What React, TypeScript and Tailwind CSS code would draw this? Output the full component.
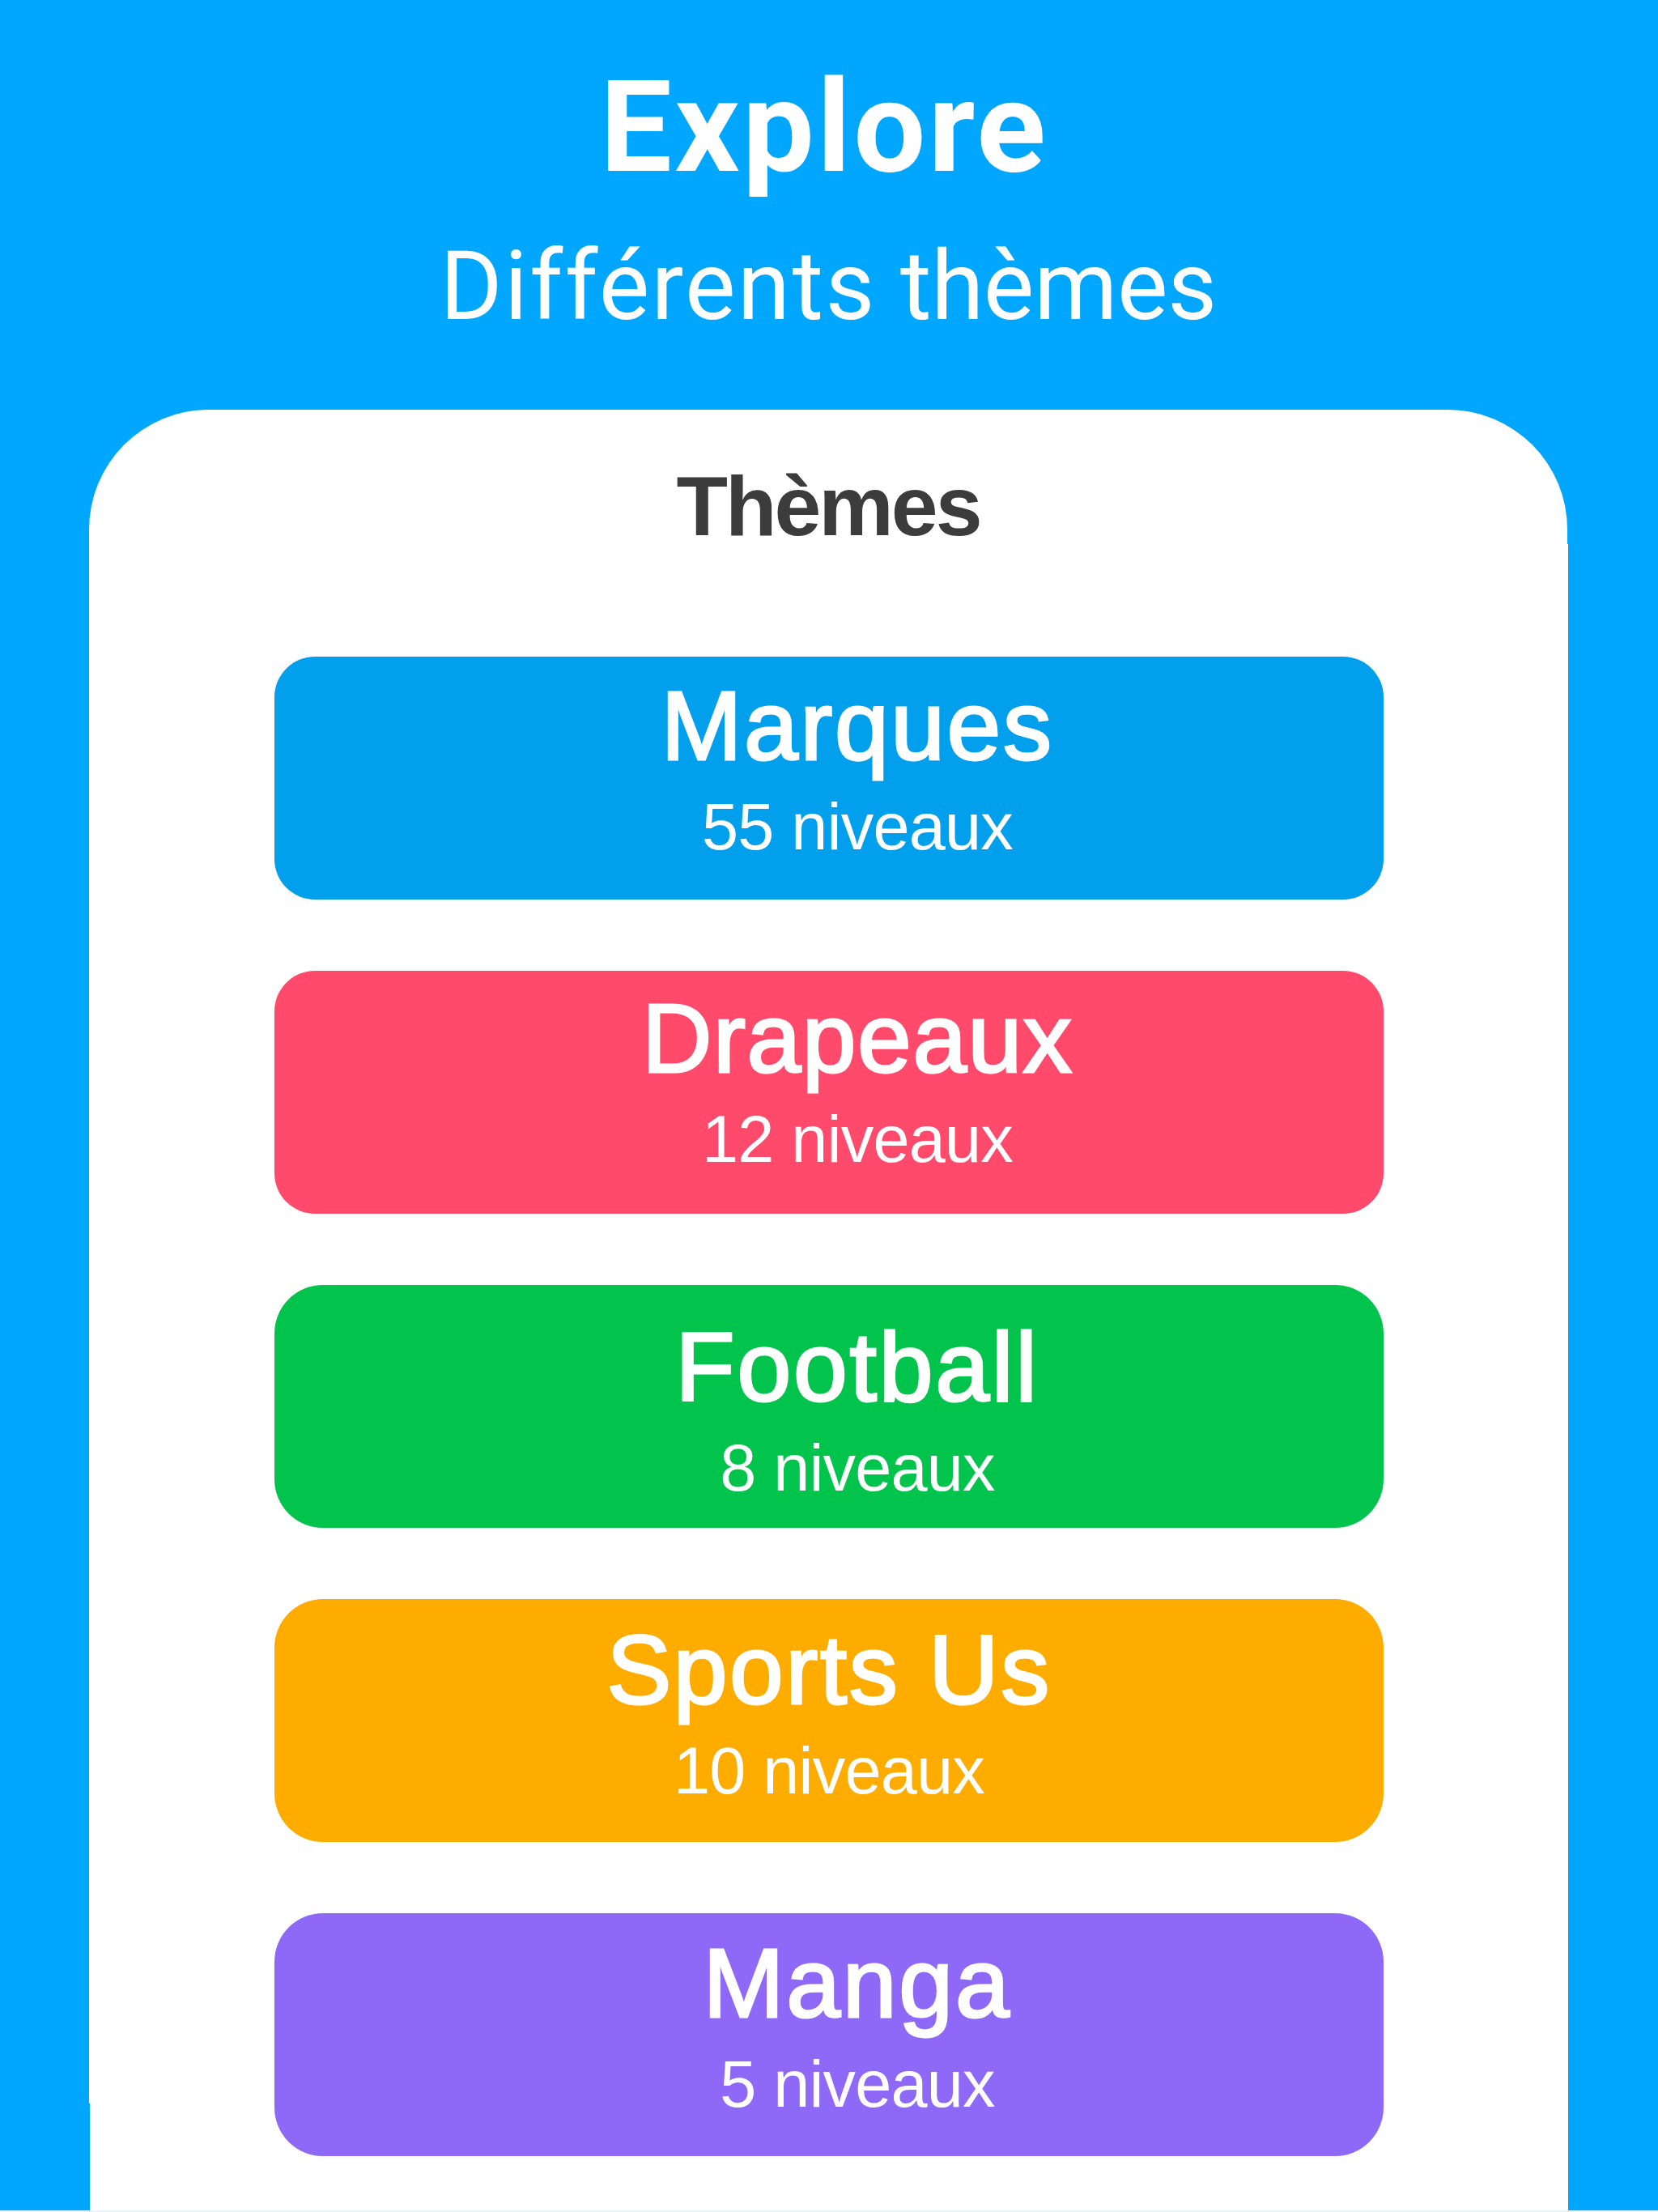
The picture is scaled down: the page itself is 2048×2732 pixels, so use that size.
import React from 'react';

const themes = [
  {
    name: 'Marques',
    levels: '55 niveaux',
    card: 'bg-[#029fec] rounded-[50px] pl-[70px] pt-[25px]',
    title: 'tracking-[2.6px]',
  },
  {
    name: 'Drapeaux',
    levels: '12 niveaux',
    card: 'bg-[#ff4a6b] rounded-[50px] pl-[70px] pt-[23px]',
    title: 'tracking-[1.5px]',
  },
  {
    name: 'Football',
    levels: '8 niveaux',
    card: 'bg-[#02c44c] rounded-[60px] pl-[70px] pt-[41px]',
    title: 'tracking-[2.8px]',
  },
  {
    name: 'Sports Us',
    levels: '10 niveaux',
    card: 'bg-[#ffac00] rounded-[60px] pt-[27px]',
    title: 'tracking-[2.5px]',
  },
  {
    name: 'Manga',
    levels: '5 niveaux',
    card: 'bg-[#8e69f7] rounded-[60px] pl-[70px] pt-[26px]',
    title: 'tracking-[2.8px]',
  },
];

const App = () => {
  return (
    <div className="flex h-[2732px] w-[2048px] flex-col items-center overflow-hidden border-b-2 border-[#e4f5ff] bg-[#01a6ff] font-['Liberation_Sans',sans-serif] text-white">
      <header className="flex h-[506px] shrink-0 flex-col items-center pt-[77px] font-[Roboto,sans-serif]">
        <h1 className="pr-[12px] text-[158px] leading-[160px] font-bold tracking-[3.3px]">Explore</h1>
        <p className="mt-[57px] pr-[2px] text-[118px] leading-[120px]">
          <span className="tracking-[2.4px]">Différents</span> <span className="tracking-[-0.4px]">thèmes</span>
        </p>
      </header>

      <main className="relative mr-[3px] flex w-[1826px] flex-1 flex-col items-center rounded-t-[148px] bg-white pl-[3px]">
        {/* Panel edges */}
        <div className="absolute top-[166px] -right-[1.5px] bottom-0 w-[2px] bg-white" />
        <div className="absolute bottom-0 left-0 h-[132px] w-[1.5px] bg-[#01a6ff]" />

        <h2 className="mt-[64px] h-[241px] pr-[2px] text-[104px] leading-[110px] font-bold tracking-[-3px] text-[#3c3c3c]">
          Thèmes
        </h2>

        <div className="flex flex-col gap-[88px]">
          {themes.map((theme) => (
            <div key={theme.name} className={`h-[300px] w-[1370px] text-center ${theme.card}`}>
              <h3 className={`text-[120px] leading-[120px] [-webkit-text-stroke:3px_white] ${theme.title}`}>
                {theme.name}
              </h3>
              <p className="mt-[5px] text-[81px] leading-[120px] tracking-[-0.8px]">{theme.levels}</p>
            </div>
          ))}
        </div>
      </main>
    </div>
  );
};

export default App;
